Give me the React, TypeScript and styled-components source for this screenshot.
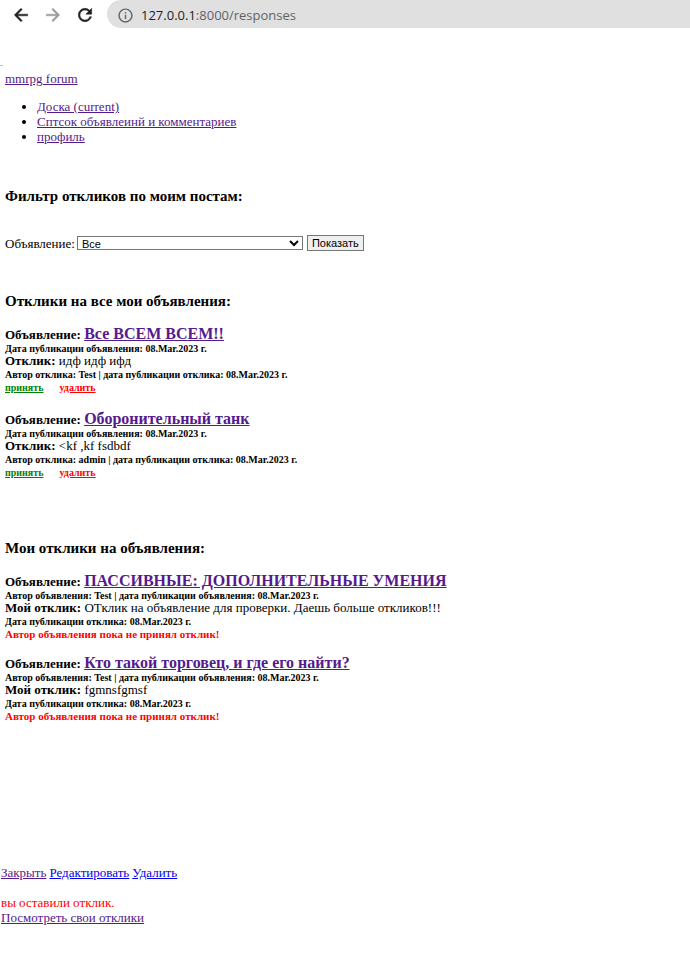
import React from "react";
import styled, { createGlobalStyle } from "styled-components";
import { MdArrowBack, MdArrowForward, MdRefresh, MdInfoOutline } from "react-icons/md";

const GlobalStyle = createGlobalStyle`
  * { box-sizing: border-box; }
  body {
    margin: 0;
    background: #fff;
    color: #000;
    font-family: "Liberation Serif", "Times New Roman", serif;
    font-size: 13px;
    line-height: 15px;
  }
`;

const Toolbar = styled.header`
  display: flex;
  align-items: center;
  height: 28px;
  padding-left: 11px;
  gap: 12px;
`;

const ToolButton = styled.button<{ $muted?: boolean }>`
  display: flex;
  align-items: center;
  justify-content: center;
  width: 20px;
  height: 20px;
  margin-top: 2px;
  padding: 0;
  border: 0;
  background: none;
  color: ${(p) => (p.$muted ? "#9a9b9d" : "#202124")};

  svg {
    flex: none;
  }

  path:not([fill="none"]) {
    stroke: currentColor;
    stroke-width: 0.6;
  }
`;

const AddressBar = styled.div`
  display: flex;
  flex: 1;
  align-items: center;
  gap: 7px;
  height: 28px;
  padding: 2px 0 0 10px;
  border-radius: 14px 0 0 14px;
  background: #e0e0e0;
  color: #5f6368;
  font-family: "Open Sans", "Noto Sans", sans-serif;
  font-size: 13px;
  line-height: 20px;
`;

const Host = styled.span`
  color: #202124;
`;

const Edge = styled.div`
  width: 3px;
  height: 1px;
  margin-top: 37px;
  background: #c0c0c0;
`;

const Page = styled.main`
  padding: 5px 5px 0;
`;

const Link = styled.a<{ $color?: string }>`
  color: ${(p) => p.$color ?? "#551a8b"};
  text-decoration: underline;
`;

const Menu = styled.ul`
  margin: 13px 0 0;
  padding-left: 32px;
`;

const Heading = styled.h3`
  margin: 0;
  font-size: 15px;
  line-height: 18px;
`;

const Section = styled.section<{ $top: number }>`
  margin-top: ${(p) => p.$top}px;
`;

const FilterForm = styled.form`
  display: flex;
  align-items: center;
  gap: 4px;
  margin-top: 30px;
`;

const Field = styled.label`
  display: flex;
  align-items: center;
  gap: 2px;
`;

const Select = styled.select`
  width: 226px;
  height: 14px;
  padding: 0;
  border: 1px solid #767676;
  border-radius: 0;
  background: #fff;
  color: #000;
  font: 11px/12px "Liberation Sans", Arial, sans-serif;
`;

const SubmitButton = styled.button`
  height: 16px;
  padding: 0 4px;
  border: 1px solid #767676;
  border-radius: 0;
  background: #efefef;
  color: #000;
  font: 11px/13px "Liberation Sans", Arial, sans-serif;
`;

const List = styled.div<{ $gap: number }>`
  display: flex;
  flex-direction: column;
  gap: ${(p) => p.$gap}px;
  margin-top: 15px;
`;

const Title = styled.div`
  font-weight: bold;
  line-height: 17px;

  a {
    font-size: 16px;
  }
`;

const Meta = styled.div<{ $tall?: boolean }>`
  font-size: 10px;
  font-weight: bold;
  line-height: ${(p) => (p.$tall ? 15 : 11)}px;
`;

const Body = styled.div`
  line-height: 13px;
`;

const Actions = styled.div`
  display: flex;
  gap: 16px;
  font-size: 10px;
  font-weight: bold;
  line-height: 12px;
`;

const Status = styled.div`
  color: #f00;
  font-size: 11px;
  font-weight: bold;
  line-height: 11px;
`;

const Footer = styled.footer`
  margin-top: 143px;
  padding: 0 1px 40px;
`;

const FooterLinks = styled.div`
  display: flex;
  gap: 3px;
`;

const Notice = styled.div`
  margin-top: 15px;
  color: #f00;
`;

const received = [
  { title: "Все ВСЕМ ВСЕМ!!", text: "идф идф ифд", author: "Test" },
  { title: "Оборонительный танк", text: "<kf ,kf fsdbdf", author: "admin" },
];

const sent = [
  {
    title: "ПАССИВНЫЕ: ДОПОЛНИТЕЛЬНЫЕ УМЕНИЯ",
    text: "ОТклик на объявление для проверки. Даешь больше откликов!!!",
  },
  { title: "Кто такой торговец, и где его найти?", text: "fgmnsfgmsf" },
];

const date = "08.Mar.2023 г.";

export default function App() {
  return (
    <>
      <GlobalStyle />
      <Toolbar>
        <ToolButton aria-label="Назад"><MdArrowBack size={20} /></ToolButton>
        <ToolButton aria-label="Вперёд" $muted><MdArrowForward size={20} /></ToolButton>
        <ToolButton aria-label="Обновить"><MdRefresh size={20} /></ToolButton>
        <AddressBar>
          <MdInfoOutline size={17} />
          <span><Host>127.0.0.1</Host>:8000/responses</span>
        </AddressBar>
      </Toolbar>
      <Edge />
      <Page>
        <nav>
          <Link href="#">mmrpg forum</Link>
          <Menu>
            <li><Link href="#">Доска (current)</Link></li>
            <li><Link href="#">Сптсок объявлеинй и комментариев</Link></li>
            <li><Link href="#">профиль</Link></li>
          </Menu>
        </nav>

        <Section $top={43}>
          <Heading>Фильтр откликов по моим постам:</Heading>
          <FilterForm onSubmit={(e) => e.preventDefault()}>
            <Field>
              Объявление:
              <Select defaultValue="all">
                <option value="all">Все</option>
                {received.map((r) => (
                  <option key={r.title}>{r.title}</option>
                ))}
              </Select>
            </Field>
            <SubmitButton type="submit">Показать</SubmitButton>
          </FilterForm>
        </Section>

        <Section $top={41}>
          <Heading>Отклики на все мои объявления:</Heading>
          <List $gap={16}>
            {received.map((r) => (
              <article key={r.title}>
                <Title>Объявление: <Link href="#">{r.title}</Link></Title>
                <Meta>Дата публикации объявления: {date}</Meta>
                <Body><b>Отклик:</b> {r.text}</Body>
                <Meta $tall>Автор отклика: {r.author} | дата публикации отклика: {date}</Meta>
                <Actions>
                  <Link href="#" $color="#008000">принять</Link>
                  <Link href="#" $color="#f00">удалить</Link>
                </Actions>
              </article>
            ))}
          </List>
        </Section>

        <Section $top={60}>
          <Heading>Мои отклики на объявления:</Heading>
          <List $gap={14}>
            {sent.map((s) => (
              <article key={s.title}>
                <Title>Объявление: <Link href="#">{s.title}</Link></Title>
                <Meta>Автор объявления: Test | дата публикации объявления: {date}</Meta>
                <Body><b>Мой отклик:</b> {s.text}</Body>
                <Meta $tall>Дата публикации отклика: {date}</Meta>
                <Status>Автор объявления пока не принял отклик!</Status>
              </article>
            ))}
          </List>
        </Section>
      </Page>
      <Footer>
        <FooterLinks>
          <Link href="#">Закрыть</Link>
          <Link href="#" $color="#00e">Редактировать</Link>
          <Link href="#" $color="#00e">Удалить</Link>
        </FooterLinks>
        <Notice>вы оставили отклик.</Notice>
        <Link href="#">Посмотреть свои отклики</Link>
      </Footer>
    </>
  );
}
